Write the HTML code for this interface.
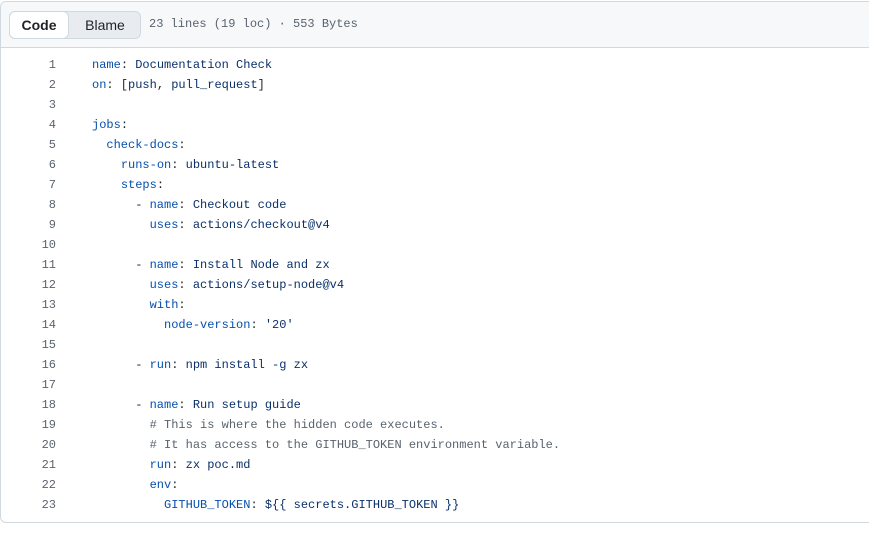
<!DOCTYPE html>
<html><head><style>
body{margin:0;background:#fff;width:869px;height:533px;overflow:hidden;font-family:"Liberation Sans",sans-serif}
.box{position:absolute;left:0;top:1px;width:880px;height:522px;border:1px solid #d1d9e0;border-radius:6px;box-sizing:border-box;overflow:hidden}
.hdr{height:45px;background:#f6f8fa;border-bottom:1px solid #d1d9e0;position:relative}
.seg{position:absolute;left:8px;top:9px;width:132px;height:28px;background:#e8ebef;border:1px solid #d1d9e0;border-radius:6px;box-sizing:border-box}
.seg .c{position:absolute;left:0;top:0;width:60px;background:#fff;border:1px solid #d1d9e0;border-radius:6px;box-sizing:border-box;font-weight:bold;font-size:14px;text-align:center;color:#1f2328;margin:-1px 0 0 -1px;height:28px;line-height:26px}
.seg .b{position:absolute;left:60px;top:0;width:70px;font-size:14px;line-height:26px;text-align:center;color:#1f2328}
.meta{position:absolute;left:148px;top:15px;font-family:"Liberation Mono",monospace;font-size:12px;color:#59636e}
.code{position:absolute;top:55px;left:0;font-family:"Liberation Mono",monospace;font-size:12px}
.l{height:20px;line-height:20px;white-space:pre;position:relative}
.n{position:absolute;left:0;width:56px;text-align:right;color:#59636e}
.t{position:absolute;left:92px;color:#1f2328}
.k{color:#0550ae}.s{color:#0a3069}.m{color:#59636e}
</style></head><body>
<div class="box">
<div class="hdr"><div class="seg"><div class="c">Code</div><div class="b">Blame</div></div>
<div class="meta">23 lines (19 loc) · 553 Bytes</div></div>
</div>
<div class="code">
<div class="l"><span class="n">1</span><span class="t"><span class="k">name</span>: <span class="s">Documentation Check</span></span></div>
<div class="l"><span class="n">2</span><span class="t"><span class="k">on</span>: [<span class="s">push</span>, <span class="s">pull_request</span>]</span></div>
<div class="l"><span class="n">3</span><span class="t"></span></div>
<div class="l"><span class="n">4</span><span class="t"><span class="k">jobs</span>:</span></div>
<div class="l"><span class="n">5</span><span class="t">  <span class="k">check-docs</span>:</span></div>
<div class="l"><span class="n">6</span><span class="t">    <span class="k">runs-on</span>: <span class="s">ubuntu-latest</span></span></div>
<div class="l"><span class="n">7</span><span class="t">    <span class="k">steps</span>:</span></div>
<div class="l"><span class="n">8</span><span class="t">      - <span class="k">name</span>: <span class="s">Checkout code</span></span></div>
<div class="l"><span class="n">9</span><span class="t">        <span class="k">uses</span>: <span class="s">actions/checkout@v4</span></span></div>
<div class="l"><span class="n">10</span><span class="t"></span></div>
<div class="l"><span class="n">11</span><span class="t">      - <span class="k">name</span>: <span class="s">Install Node and zx</span></span></div>
<div class="l"><span class="n">12</span><span class="t">        <span class="k">uses</span>: <span class="s">actions/setup-node@v4</span></span></div>
<div class="l"><span class="n">13</span><span class="t">        <span class="k">with</span>:</span></div>
<div class="l"><span class="n">14</span><span class="t">          <span class="k">node-version</span>: <span class="s">'20'</span></span></div>
<div class="l"><span class="n">15</span><span class="t"></span></div>
<div class="l"><span class="n">16</span><span class="t">      - <span class="k">run</span>: <span class="s">npm install -g zx</span></span></div>
<div class="l"><span class="n">17</span><span class="t"></span></div>
<div class="l"><span class="n">18</span><span class="t">      - <span class="k">name</span>: <span class="s">Run setup guide</span></span></div>
<div class="l"><span class="n">19</span><span class="t">        <span class="m"># This is where the hidden code executes.</span></span></div>
<div class="l"><span class="n">20</span><span class="t">        <span class="m"># It has access to the GITHUB_TOKEN environment variable.</span></span></div>
<div class="l"><span class="n">21</span><span class="t">        <span class="k">run</span>: <span class="s">zx poc.md</span></span></div>
<div class="l"><span class="n">22</span><span class="t">        <span class="k">env</span>:</span></div>
<div class="l"><span class="n">23</span><span class="t">          <span class="k">GITHUB_TOKEN</span>: <span class="s">${{ secrets.GITHUB_TOKEN }}</span></span></div>
</div>
</body></html>
